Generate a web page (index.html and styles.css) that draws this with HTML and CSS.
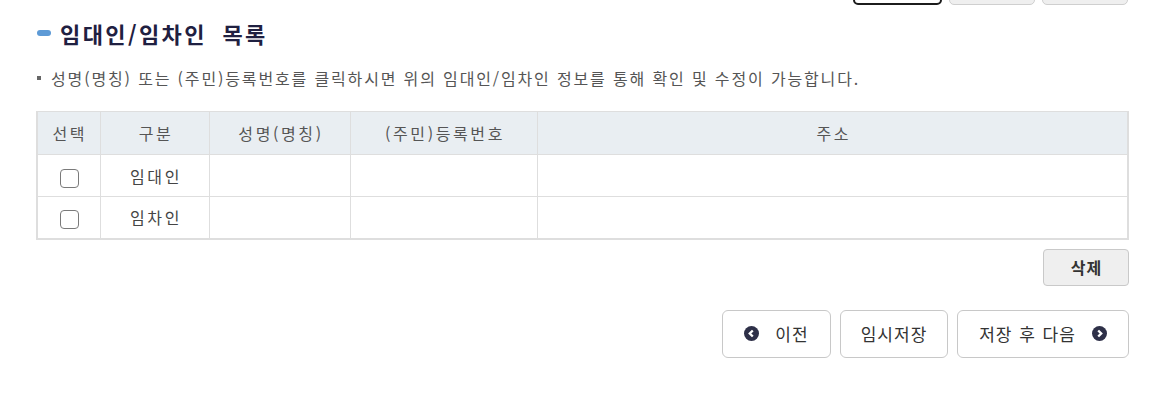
FILE: index.html
```html
<!DOCTYPE html>
<html lang="ko">
<head>
<meta charset="utf-8">
<link rel="stylesheet" href="styles.css">
</head>
<body>
<div class="page">
  <div class="top-actions">
    <span class="tbtn tbtn-active"></span>
    <span class="tbtn"></span>
    <span class="tbtn"></span>
  </div>
  <h2 class="title"><span class="pill"></span>임대인/임차인 목록</h2>
  <p class="note"><span class="sq"></span>성명(명칭) 또는 (주민)등록번호를 클릭하시면 위의 임대인/임차인 정보를 통해 확인 및 수정이 가능합니다.</p>
  <table class="grid">
    <colgroup>
      <col class="c1"><col class="c2"><col class="c3"><col class="c4"><col>
    </colgroup>
    <thead>
      <tr><th>선택</th><th>구분</th><th>성명(명칭)</th><th>(주민)등록번호</th><th>주소</th></tr>
    </thead>
    <tbody>
      <tr><td><span class="cb"></span></td><td>임대인</td><td></td><td></td><td></td></tr>
      <tr><td><span class="cb"></span></td><td>임차인</td><td></td><td></td><td></td></tr>
    </tbody>
  </table>
  <div class="row-actions">
    <button class="btn-del">삭제</button>
  </div>
  <div class="nav-actions">
    <button class="nbtn nbtn-prev"><svg class="ico" viewBox="0 0 14 14"><circle cx="7" cy="7" r="7" fill="#2e3048"/><path d="M8.2 4.2 5.4 7l2.8 2.8" fill="none" stroke="#fff" stroke-width="2.2"/></svg><span>이전</span></button>
    <button class="nbtn nbtn-tmp"><span>임시저장</span></button>
    <button class="nbtn nbtn-next"><span>저장 후 다음</span><svg class="ico" viewBox="0 0 14 14"><circle cx="7" cy="7" r="7" fill="#2e3048"/><path d="M5.8 4.2 8.6 7l-2.8 2.8" fill="none" stroke="#fff" stroke-width="2.2"/></svg></button>
  </div>
</div>
</body>
</html>
```
FILE: styles.css
```css
* { box-sizing: border-box; }
html, body { margin: 0; padding: 0; background: #fff; }
body { font-family: "Noto Sans CJK KR", "Noto Sans", sans-serif; color: #444; }
.page { padding: 0 21px 0 36px; }

.top-actions { display: flex; justify-content: flex-end; gap: 7px; margin-top: -35px; padding-right: 1px; }
.tbtn { display: block; width: 86px; height: 40px; border: 1px solid #cfcfcf; border-radius: 5px; background: #efefef; }
.tbtn-active { width: 89px; border: 2px solid #1c1c1c; background: #fff; margin-right: 0; }

.title { display: flex; align-items: center; margin: 14px 0 0 1px; font-size: 22px; font-weight: 700; color: #1f2041; letter-spacing: 2.4px; word-spacing: 7px; line-height: 28px; }
.pill { display: inline-block; width: 14px; height: 6px; border-radius: 3px; background: #5d9ad6; margin-right: 9px; }

.note { display: flex; align-items: center; margin: 21px 0 0 0; font-size: 16px; color: #555; line-height: 20px; letter-spacing: 1.85px; }
.sq { display: inline-block; width: 4px; height: 4px; background: #666; margin: 0 10px 0 1px; }

.grid { width: 100%; margin-top: 23px; border-collapse: collapse; table-layout: fixed; border: 2px solid #dedede; border-top-width: 1px; font-size: 16px; letter-spacing: 2.6px; }
.c1 { width: 63px; } .c2 { width: 109px; } .c3 { width: 141px; } .c4 { width: 187px; }
.grid th, .grid td { border: 1px solid #dedede; text-align: center; height: 43px; padding: 0 0 0 3px; }
.grid th { background: #e9eef2; font-weight: 400; color: #555; height: 43px; }
.grid td { color: #444; height: 42px; }
.grid td:first-child, .grid th:first-child { padding-left: 2px; }
.cb { display: inline-block; width: 19px; height: 19px; border: 1.5px solid #7a7a7a; border-radius: 4px; vertical-align: middle; background: #fff; }

.row-actions { display: flex; justify-content: flex-end; margin-top: 9px; }
.btn-del { width: 86px; height: 37px; border: 1px solid #c9c9c9; border-radius: 4px; background: #efefef; font-family: inherit; font-size: 16px; font-weight: 700; color: #333; letter-spacing: 1px; padding: 0 0 0 1px; }

.nav-actions { display: flex; justify-content: flex-end; gap: 9px; margin-top: 24px; }
.nbtn { display: flex; align-items: center; justify-content: center; gap: 16px; height: 48px; border: 1px solid #c8c8c8; border-radius: 6px; background: #fff; font-family: inherit; font-size: 17px; color: #333; padding: 0; letter-spacing: 1px; word-spacing: 1px; }
.nbtn-prev { width: 109px; }
.nbtn-tmp { width: 108px; }
.nbtn-next { width: 172px; }
.ico { width: 15px; height: 15px; flex: none; }
```
